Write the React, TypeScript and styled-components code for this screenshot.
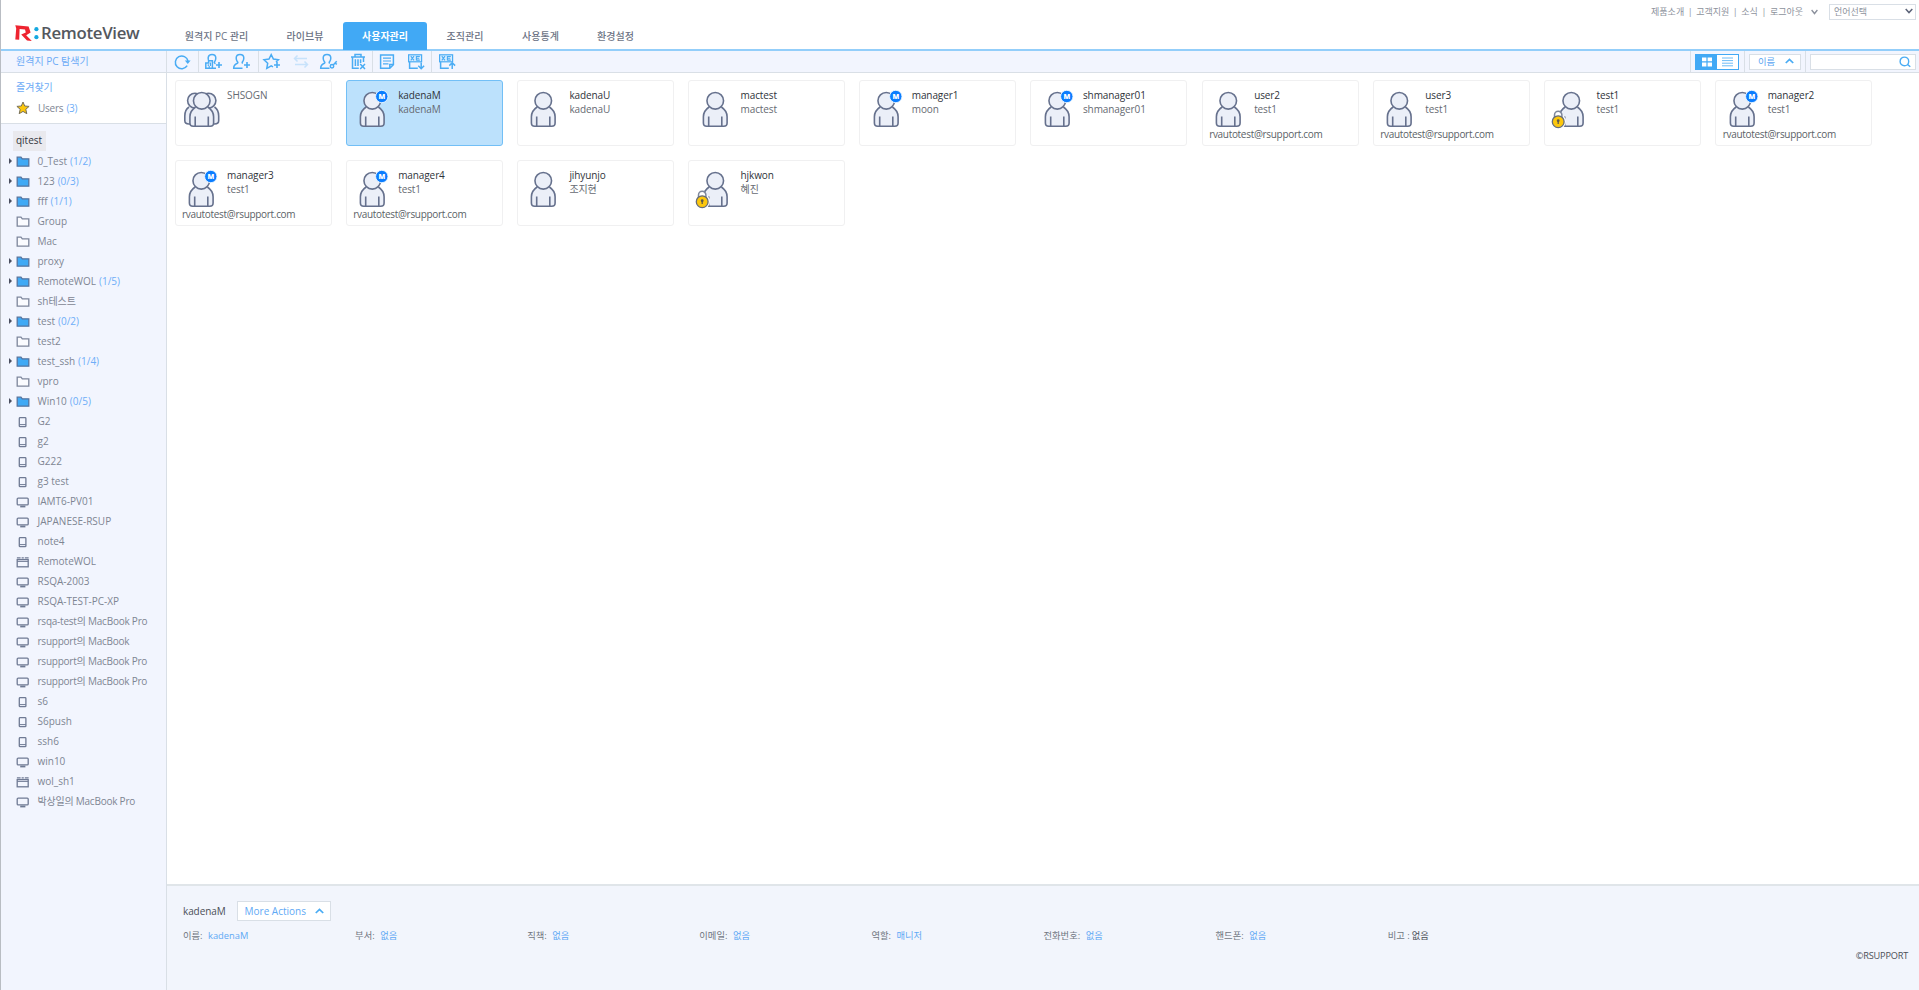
import React from "react";
import styled, { createGlobalStyle, css } from "styled-components";

const Global = createGlobalStyle`
  * { box-sizing: border-box; }
  body { margin: 0; background: #fff; overflow: hidden; }
`;

const BLUE = "#41a9f5";
const LINE = "#d9dfe6";

const Page = styled.div`
  height: 990px;
  display: flex;
  flex-direction: column;
  border-left: 1px solid #b9bdc3;
  font-family: "Open Sans", "Noto Sans CJK KR", sans-serif;
  font-size: 10px;
  color: #7e8593;
  white-space: nowrap;
`;

const Header = styled.header`
  height: 51px;
  flex: none;
  display: flex;
  justify-content: space-between;
  border-bottom: 2px solid #93cefa;
`;

const Brand = styled.div`
  width: 165px;
  padding: 16px 0 0 14px;
  display: flex;
  align-items: center;
  color: #54585e;
  font-size: 16.8px;
  font-weight: 600;
`;
const BrandName = styled.span`
  letter-spacing: -0.3px;
`;

const Left = styled.div`
  display: flex;
`;
const Nav = styled.nav`
  display: flex;
  align-items: flex-end;
  height: 50px;
`;
const Tab = styled.div<{ $w: number; $active?: boolean }>`
  width: ${(p) => p.$w}px;
  height: 28px;
  padding-bottom: 2px;
  display: flex;
  align-items: center;
  justify-content: center;
  border-radius: 3px 3px 0 0;
  font-size: 10px;
  font-weight: 500;
  color: #6c7384;
  ${(p) =>
    p.$active &&
    css`
      background: ${BLUE};
      color: #fff;
      font-weight: 700;
    `}
`;

const TopLinks = styled.div`
  height: 23px;
  display: flex;
  align-items: center;
  padding-right: 3px;
  font-size: 9px;
  color: #8d929c;
`;
const TopLink = styled.span``;
const Bar = styled.span`
  width: 12px;
  text-align: center;
`;
const LogoutChevron = styled.span`
  display: flex;
  margin-left: 8px;
`;
const Lang = styled.div`
  width: 87px;
  height: 16px;
  margin-left: 11px;
  padding: 0 2px 1px 4px;
  border: 1px solid ${LINE};
  display: flex;
  align-items: center;
  justify-content: space-between;
`;

const Body = styled.div`
  flex: 1;
  min-height: 0;
  display: flex;
`;
const Side = styled.aside`
  width: 166px;
  flex: none;
  background: #f2f5fe;
  border-right: 1px solid ${LINE};
`;
const SideTitle = styled.div`
  height: 22px;
  padding: 0 0 2px 15px;
  display: flex;
  align-items: center;
  border-bottom: 1px solid ${LINE};
  color: #6cabf6;
`;
const Favorites = styled.div`
  height: 51px;
  padding: 4px 0 0 15px;
  background: #fff;
  border-bottom: 1px solid ${LINE};
`;
const FavTitle = styled.div`
  height: 20px;
  line-height: 20px;
  color: #6cabf6;
`;
const FavRow = styled.div`
  height: 21px;
  display: flex;
  align-items: center;
  gap: 8px;
`;
const Count = styled.span`
  margin-left: 3px;
  color: #6eadf8;
`;
const Root = styled.div`
  width: 33px;
  height: 20px;
  margin: 7px 0 0 12px;
  padding: 0 1px 2px 0;
  background: #e9e9ee;
  color: #33363c;
  display: flex;
  align-items: center;
  justify-content: center;
`;
const Node = styled.div`
  height: 20px;
  padding: 0 0 1px 7.5px;
  display: flex;
  align-items: center;
`;
const Label = styled.span<{ $tight: boolean }>`
  letter-spacing: ${(p) => (p.$tight ? "-0.23px" : "0")};
`;
const Arrow = styled.span<{ $on: boolean }>`
  width: 0;
  height: 0;
  margin-right: 4px;
  border: 3px solid transparent;
  border-left: 3px solid ${(p) => (p.$on ? "#4a4f60" : "transparent")};
  border-right: 0;
`;
const NodeIcon = styled.span`
  width: 22px;
  height: 12px;
  flex: none;
`;

const Main = styled.main`
  flex: 1;
  min-width: 0;
  display: flex;
  flex-direction: column;
`;
const Toolbar = styled.div`
  height: 22px;
  flex: none;
  display: flex;
  justify-content: space-between;
  background: #f2f5fe;
  border-bottom: 1px solid ${LINE};
`;
const Tools = styled.div`
  display: flex;
`;
const ToolGroup = styled.div<{ $w: number }>`
  width: ${(p) => p.$w}px;
  padding-right: 1px;
  display: flex;
  align-items: center;
  justify-content: center;
  gap: 8.5px;
  border-right: 1px solid ${LINE};
  &:last-child {
    border-right: 0;
    padding-right: 2px;
  }
`;
const RightTools = styled.div`
  display: flex;
`;
const RightCell = styled.div<{ $w: number }>`
  width: ${(p) => p.$w}px;
  border-left: 1px solid ${LINE};
  display: flex;
  align-items: center;
  padding-left: 4px;
`;
const Toggle = styled.div`
  display: flex;
  width: 44px;
  height: 16px;
  border: 1px solid ${BLUE};
  background: #fff;
`;
const ToggleHalf = styled.div<{ $on?: boolean }>`
  flex: 1;
  display: flex;
  align-items: center;
  justify-content: center;
  background: ${(p) => (p.$on ? BLUE : "#fff")};
`;
const Sort = styled.div`
  width: 52px;
  height: 16px;
  padding: 0 6px 1px 8px;
  display: flex;
  align-items: center;
  justify-content: space-between;
  background: #fff;
  border: 1px solid ${LINE};
  color: #5ba6f2;
  font-size: 9.3px;
`;
const Search = styled.div`
  width: 106px;
  height: 16px;
  padding-right: 4px;
  display: flex;
  align-items: center;
  justify-content: flex-end;
  background: #fff;
  border: 1px solid ${LINE};
`;

const Grid = styled.div`
  flex: 1;
  padding: 7px 0 0 7.5px;
  display: grid;
  grid-template-columns: repeat(10, 157px);
  grid-auto-rows: 66px;
  gap: 14px 14.2px;
  align-content: start;
`;
const Card = styled.div<{ $selected?: boolean }>`
  padding: 11px 0 0 6.5px;
  border: 1px solid ${(p) => (p.$selected ? "#72bff6" : "#f0f0f1")};
  border-radius: 3px;
  background: ${(p) => (p.$selected ? "#bce1fc" : "#fff")};
  color: #5b5f67;
`;
const CardTop = styled.div`
  display: flex;
  height: 35px;
`;
const Avatar = styled.svg`
  width: 38px;
  height: 38px;
  margin-right: 7px;
  flex: none;
  overflow: visible;
`;
const Names = styled.div`
  margin-top: -4.5px;
  line-height: 14.5px;
  letter-spacing: -0.1px;
`;
const Name = styled.div<{ $strong?: boolean }>`
  color: ${(p) => (p.$strong ? "#2f333a" : "#666a72")};
`;
const Mail = styled.div`
  line-height: 14px;
  letter-spacing: -0.31px;
`;

const Detail = styled.section`
  height: 106px;
  flex: none;
  padding: 15px 11px 0 16px;
  background: #f2f5fc;
  border-top: 2px solid #e0e5e9;
`;
const DetailHead = styled.div`
  display: flex;
  align-items: center;
  height: 20px;
  color: #4b4f57;
  letter-spacing: -0.1px;
`;
const More = styled.div`
  width: 94px;
  height: 20px;
  margin-left: 11px;
  padding: 0 6px 1px 7px;
  display: flex;
  align-items: center;
  justify-content: space-between;
  background: #fff;
  border: 1px solid ${LINE};
  color: #5fa9f5;
  letter-spacing: 0;
`;
const Info = styled.div`
  height: 20px;
  margin-top: 4px;
  display: grid;
  grid-template-columns: repeat(8, 172.1px);
  align-items: center;
  font-size: 9.3px;
  color: #70757f;
`;
const Value = styled.span<{ $plain?: boolean }>`
  margin-left: ${(p) => (p.$plain ? 2 : 5.5)}px;
  color: ${(p) => (p.$plain ? "#4b4f57" : "#5fa9f5")};
`;
const Copy = styled.div`
  margin-top: 4px;
  text-align: right;
  font-size: 9.2px;
  letter-spacing: -0.2px;
  color: #4b4f57;
`;

const Chevron = ({ up, color, w = 8 }: { up?: boolean; color: string; w?: number }) => (
  <svg width={w} height={6} viewBox="0 0 8 6" preserveAspectRatio="none">
    <path d={up ? "M0.7 5 L4 1.4 L7.3 5" : "M0.7 1 L4 4.6 L7.3 1"} fill="none" stroke={color} strokeWidth="1.5" />
  </svg>
);

const Ico = ({ children, dim }: { children: React.ReactNode; dim?: boolean }) => (
  <svg width="20" height="18" viewBox="0 0 20 18" fill="none" stroke="#4aacf4" strokeWidth="1.5" opacity={dim ? 0.25 : 1}>
    {children}
  </svg>
);

const userOutline = "M10.5 15.3 H1.7 C1.7 12.5 3 11.2 5.4 10.3 C6.1 10 6 9.3 5.3 8.6 C4.4 7.3 4.2 6.2 4.2 5 C4.2 2.8 5.8 1.5 8 1.5 C10.2 1.5 11.8 2.8 11.8 5 C11.8 6.2 11.6 7.3 10.7 8.6 C10 9.3 10 10 10.8 10.4";

const Refresh = () => (
  <Ico>
    <path d="M15.2 12.7 A6.4 6.4 0 1 1 16 8" />
    <path d="M12.8 7.6 H18.6 L15.8 10.9 Z" fill="#4aacf4" stroke="none" />
  </Ico>
);
const GroupAdd = () => (
  <Ico>
    <path d="M4.5 7 C4.1 6.2 4.2 5 4.2 4.5 C4.5 2.5 6 1.5 8 1.5 C10.2 1.5 11.8 2.8 11.8 5 C11.8 6.2 11.6 7.3 10.7 8.6 C10 9.3 10 10 11.5 10.7" />
    <path d="M1.8 15.2 V10 H4.6 V7.8 H8.4 V15.2 Z M8.2 15.2 H12" />
    <path d="M4.3 11.2 V13 M6.4 9.6 V13 M5.2 15 V13" strokeWidth="1.2" />
    <path d="M12 12 H18 M15 9 V15" strokeWidth="1.6" />
  </Ico>
);
const UserAdd = () => (
  <Ico>
    <path d={userOutline} />
    <path d="M12 12 H18 M15 9 V15" strokeWidth="1.6" />
  </Ico>
);
const StarAdd = () => (
  <Ico>
    <path d="M11 13.8 L9.2 12.8 L4.8 15.3 L5.7 10.2 L2 6.7 L7 6 L9.2 1.6 L11.4 6 L16.4 6.7 L14 9" />
    <path d="M12 12 H18 M15 9 V15" strokeWidth="1.6" />
  </Ico>
);
const Swap = () => (
  <Ico dim>
    <path d="M16 5.5 H3.5 M6.5 2.5 L3.5 5.5 L6.5 8.5 M4 11.5 H16.5 M13.5 8.5 L16.5 11.5 L13.5 14.5" />
  </Ico>
);
const UserEdit = () => (
  <Ico>
    <path d={userOutline} />
    <circle cx="13" cy="13.3" r="1.7" />
    <path d="M14.2 12 L17.7 8.2 M16 10 L17.8 11.4" />
  </Ico>
);
const Trash = () => (
  <Ico>
    <path d="M3 4 H17 M7 3.6 V1.6 H13 V3.6 M4.5 4 V15.2 H10.8 M15.5 4 V9 M7.4 6.3 V13 M10 6.3 V13 M12.6 6.3 V10" />
    <path d="M12.2 11 L17 16 M17 11 L12.2 16" />
  </Ico>
);
const Note = () => (
  <Ico>
    <path d="M3.6 2 H16.4 V11.7 L12.8 15.3 H3.6 Z M16.2 11.6 H12.8 V15" />
    <path d="M6 5.2 H14 M6 8 H14 M6 10.8 H11.5" strokeWidth="1.2" />
  </Ico>
);
const Excel = ({ up }: { up?: boolean }) => (
  <Ico>
    <rect x="2.6" y="1.8" width="13" height="7" fill="#d9edfe" strokeWidth="1.2" />
    <path d="M4.8 3.2 L8 7.4 M8 3.2 L4.8 7.4 M10.4 3 V7.6 M10.4 3.5 H13.8 M10.4 5.3 H13.2 M10.4 7.1 H13.8" strokeWidth="1.1" />
    <path d="M3.6 8.8 V15.3 H11.8" />
    <path d={up ? "M15.2 16 V10.4 M12.3 12.6 L15.2 9.7 L18.1 12.6" : "M15.2 9.6 V15.2 M12.3 12.8 L15.2 15.7 L18.1 12.8"} />
  </Ico>
);

const bodyPath = "M6.6 15 C2.8 17.6 0.9 20.5 0.9 24.8 V31 Q0.9 34.3 4.2 34.3 H21.3 Q24.6 34.3 24.6 31 V24.8 C24.6 20.5 22.7 17.6 18.9 15";

const Person = ({ manager, locked }: { manager?: boolean; locked?: boolean }) => (
  <Avatar viewBox="-6.5 0 38 38">
    <g fill="#ebeff8" stroke="#66718d" strokeWidth="1.6">
      <path d={bodyPath} />
      <path d="M6.2 24.6 V34 M19.3 24.6 V34" />
      <circle cx="12.75" cy="8.8" r="8.3" />
    </g>
    {manager && (
      <>
        <circle cx="22.3" cy="4.5" r="6.2" fill="#0a7dff" stroke="#f2f9ff" strokeWidth="0.9" />
        <text x="22.3" y="7.1" textAnchor="middle" fontSize="7" fontWeight="800" fill="#fff">M</text>
      </>
    )}
    {locked && (
      <>
        <circle cx="-0.3" cy="29.4" r="7.8" fill="#fff" />
        <path d="M-4 25 V23 A3.7 3.7 0 0 1 3.4 23 V25" fill="#fff" stroke="#7e879c" strokeWidth="1.5" />
        <circle cx="-0.3" cy="29.7" r="5.9" fill="#fcc70d" stroke="#666c78" strokeWidth="1.3" />
        <circle cx="-0.3" cy="28.7" r="1.4" fill="#5f5a4a" />
        <path d="M-0.3 29 V32" stroke="#5f5a4a" strokeWidth="1.3" />
      </>
    )}
  </Avatar>
);

const People = () => (
  <Avatar viewBox="-7 0 38 38">
    <g fill="#ebeff8" stroke="#66718d" strokeWidth="1.6">
      <path d="M0 15 C-3 17 -4.2 20 -4.2 24 V28.5 Q-4.2 32 0 32 H25.5 Q29.7 32 29.7 28.5 V24 C29.7 20 28.5 17 25.5 15" />
      <circle cx="6" cy="8.6" r="7.4" />
      <circle cx="19.5" cy="8.6" r="7.4" />
      <path d={bodyPath} />
      <path d="M6.2 24.6 V34 M19.3 24.6 V34" />
      <circle cx="12.75" cy="8.8" r="8.3" />
    </g>
  </Avatar>
);

type Kind = "open" | "folder" | "phone" | "pc" | "wol";

const TreeIcon = ({ kind }: { kind: Kind }) => (
  <NodeIcon>
    <svg width="14" height="13" viewBox="0 0 14 13" fill="none" stroke="#6f7a94" strokeWidth="1.3" display="block">
      {(kind === "open" || kind === "folder") && (
        <path
          d="M1.2 11.2 V2.2 H5 L6.3 3.8 H12.8 V11.2 Z"
          fill={kind === "open" ? "#3fa9f5" : "#fafbff"}
          stroke={kind === "open" ? "#54749f" : "#7d869c"}
        />
      )}
      {kind === "phone" && (
        <>
          <rect x="3.3" y="2.7" width="6.6" height="9" rx="0.8" />
          <path d="M3.5 9.6 H9.9" strokeWidth="1" />
        </>
      )}
      {kind === "pc" && (
        <>
          <rect x="1.2" y="3.1" width="11" height="6.8" rx="1" />
          <path d="M4.2 11.5 H9.4" strokeWidth="1.8" />
        </>
      )}
      {kind === "wol" && (
        <>
          <rect x="1.2" y="4.6" width="11" height="7.2" />
          <path d="M0.9 2.8 H4.6 M5.6 2.8 H7.8 M8.8 2.8 H12.6" />
          <path d="M1.2 6.4 H12.2" strokeWidth="1" />
        </>
      )}
    </svg>
  </NodeIcon>
);

const tree: [Kind, string, string?][] = [
  ["open", "0_Test", "(1/2)"],
  ["open", "123", "(0/3)"],
  ["open", "fff", "(1/1)"],
  ["folder", "Group"],
  ["folder", "Mac"],
  ["open", "proxy"],
  ["open", "RemoteWOL", "(1/5)"],
  ["folder", "sh테스트"],
  ["open", "test", "(0/2)"],
  ["folder", "test2"],
  ["open", "test_ssh", "(1/4)"],
  ["folder", "vpro"],
  ["open", "Win10", "(0/5)"],
  ["phone", "G2"],
  ["phone", "g2"],
  ["phone", "G222"],
  ["phone", "g3 test"],
  ["pc", "IAMT6-PV01"],
  ["pc", "JAPANESE-RSUP"],
  ["phone", "note4"],
  ["wol", "RemoteWOL"],
  ["pc", "RSQA-2003"],
  ["pc", "RSQA-TEST-PC-XP"],
  ["pc", "rsqa-test의 MacBook Pro"],
  ["pc", "rsupport의 MacBook"],
  ["pc", "rsupport의 MacBook Pro"],
  ["pc", "rsupport의 MacBook Pro"],
  ["phone", "s6"],
  ["phone", "S6push"],
  ["phone", "ssh6"],
  ["pc", "win10"],
  ["wol", "wol_sh1"],
  ["pc", "박상일의 MacBook Pro"],
];

type User = { id: string; name?: string; mail?: boolean; m?: boolean; lock?: boolean; group?: boolean };
const users: User[] = [
  { id: "SHSOGN", group: true },
  { id: "kadenaM", name: "kadenaM", m: true },
  { id: "kadenaU", name: "kadenaU" },
  { id: "mactest", name: "mactest" },
  { id: "manager1", name: "moon", m: true },
  { id: "shmanager01", name: "shmanager01", m: true },
  { id: "user2", name: "test1", mail: true },
  { id: "user3", name: "test1", mail: true },
  { id: "test1", name: "test1", lock: true },
  { id: "manager2", name: "test1", mail: true, m: true },
  { id: "manager3", name: "test1", mail: true, m: true },
  { id: "manager4", name: "test1", mail: true, m: true },
  { id: "jihyunjo", name: "조지현" },
  { id: "hjkwon", name: "혜진", lock: true },
];

const info: [string, string][] = [
  ["이름:", "kadenaM"],
  ["부서:", "없음"],
  ["직책:", "없음"],
  ["이메일:", "없음"],
  ["역할:", "매니저"],
  ["전화번호:", "없음"],
  ["핸드폰:", "없음"],
  ["비고 :", "없음"],
];

export default function App() {
  return (
    <Page>
      <Global />
      <Header>
        <Left>
          <Brand>
            <svg width="26" height="18" viewBox="0 0 26 18">
              <path d="M0.3 1.2 L13.6 2.6 L15.6 8.6 L11.2 11.2 L16.8 17 L12 16.6 L6.2 10.4 L10.8 8.4 L10 5.6 L4.6 5 L4.2 15.8 L0.3 15.4 L1.2 4.6 Z" fill="#ee2430" />
              <circle cx="21.4" cy="5.2" r="2.1" fill="#15a8e0" />
              <circle cx="21.4" cy="13.2" r="2.1" fill="#15a8e0" />
            </svg>
            <BrandName>RemoteView</BrandName>
          </Brand>
          <Nav>
            <Tab $w={101}>원격지 PC 관리</Tab>
            <Tab $w={76}>라이브뷰</Tab>
            <Tab $w={84} $active>사용자관리</Tab>
            <Tab $w={76}>조직관리</Tab>
            <Tab $w={75}>사용통계</Tab>
            <Tab $w={75}>환경설정</Tab>
          </Nav>
        </Left>
        <TopLinks>
          <TopLink>제품소개</TopLink>
          <Bar>|</Bar>
          <TopLink>고객지원</TopLink>
          <Bar>|</Bar>
          <TopLink>소식</TopLink>
          <Bar>|</Bar>
          <TopLink>로그아웃</TopLink>
          <LogoutChevron>
            <Chevron color="#8a8f9b" w={7} />
          </LogoutChevron>
          <Lang>
            언어선택
            <Chevron color="#5d6479" w={8} />
          </Lang>
        </TopLinks>
      </Header>
      <Body>
        <Side>
          <SideTitle>원격지 PC 탐색기</SideTitle>
          <Favorites>
            <FavTitle>즐겨찾기</FavTitle>
            <FavRow>
              <svg width="14" height="14" viewBox="0 0 14 14">
                <path d="M7 1 L8.7 5 L13.1 5.4 L9.8 8.3 L10.8 12.7 L7 10.4 L3.2 12.7 L4.2 8.3 L0.9 5.4 L5.3 5 Z" fill="#fcc70d" stroke="#77705a" strokeWidth="1" />
              </svg>
              <Label $tight>
                Users<Count>(3)</Count>
              </Label>
            </FavRow>
          </Favorites>
          <Root>qitest</Root>
          {tree.map(([kind, label, count], i) => (
            <Node key={i}>
              <Arrow $on={kind === "open"} />
              <TreeIcon kind={kind} />
              <Label $tight={label.includes("MacBook")}>{label}</Label>
              {count && <Count>{count}</Count>}
            </Node>
          ))}
        </Side>
        <Main>
          <Toolbar>
            <Tools>
              <ToolGroup $w={32}><Refresh /></ToolGroup>
              <ToolGroup $w={60}><GroupAdd /><UserAdd /></ToolGroup>
              <ToolGroup $w={114}><StarAdd /><Swap /><UserEdit /><Trash /></ToolGroup>
              <ToolGroup $w={59}><Note /><Excel /></ToolGroup>
              <ToolGroup $w={31}><Excel up /></ToolGroup>
            </Tools>
            <RightTools>
              <RightCell $w={54}>
                <Toggle>
                  <ToggleHalf $on>
                    <svg width="10" height="10" viewBox="0 0 10 10" fill="#fff">
                      <path d="M0 0.5 H4.4 V4.3 H0 Z M5.6 0.5 H10 V4.3 H5.6 Z M0 5.6 H4.4 V9.5 H0 Z M5.6 5.6 H10 V9.5 H5.6 Z" />
                    </svg>
                  </ToggleHalf>
                  <ToggleHalf>
                    <svg width="11" height="10" viewBox="0 0 11 10" stroke="#6dbcf7">
                      <path d="M0 1 H11 M0 3.6 H11 M0 6.2 H11 M0 8.8 H11" />
                    </svg>
                  </ToggleHalf>
                </Toggle>
              </RightCell>
              <RightCell $w={61}>
                <Sort>
                  이름
                  <Chevron up color="#4aacf4" w={9} />
                </Sort>
              </RightCell>
              <RightCell $w={114}>
                <Search>
                  <svg width="12" height="12" viewBox="0 0 12 12" fill="none" stroke="#4aacf4" strokeWidth="1.4">
                    <circle cx="5.4" cy="5.4" r="4.3" />
                    <path d="M8.4 8.4 L11.3 10.8" />
                  </svg>
                </Search>
              </RightCell>
            </RightTools>
          </Toolbar>
          <Grid>
            {users.map((u, i) => (
              <Card key={u.id} $selected={i === 1}>
                <CardTop>
                  {u.group ? <People /> : <Person manager={u.m} locked={u.lock} />}
                  <Names>
                    <Name $strong={!u.group}>{u.id}</Name>
                    {u.name && <Name>{u.name}</Name>}
                  </Names>
                </CardTop>
                {u.mail && <Mail>rvautotest@rsupport.com</Mail>}
              </Card>
            ))}
          </Grid>
          <Detail>
            <DetailHead>
              kadenaM
              <More>
                More Actions
                <Chevron up color="#4aacf4" w={9} />
              </More>
            </DetailHead>
            <Info>
              {info.map(([k, v], i) => (
                <span key={k}>
                  {k}
                  <Value $plain={i === 7}>{v}</Value>
                </span>
              ))}
            </Info>
            <Copy>©RSUPPORT</Copy>
          </Detail>
        </Main>
      </Body>
    </Page>
  );
}
